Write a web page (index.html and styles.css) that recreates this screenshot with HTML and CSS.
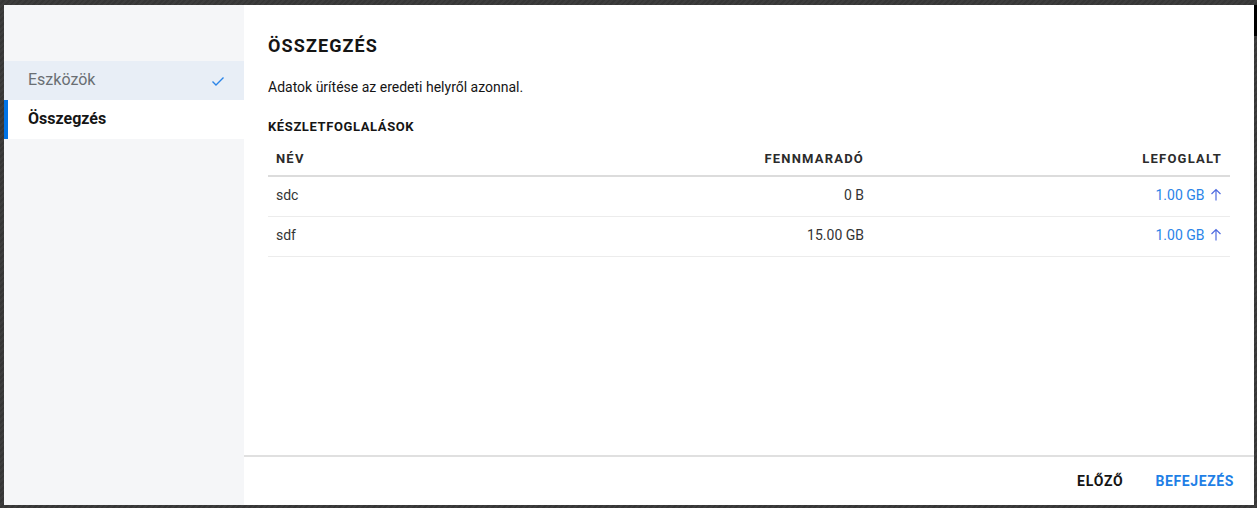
FILE: index.html
```html
<!DOCTYPE html>
<html lang="hu">
<head>
<meta charset="utf-8">
<title>Összegzés</title>
<link rel="stylesheet" href="styles.css">
</head>
<body>
<div class="backdrop">
  <div class="modal">
    <aside class="sidebar">
      <div class="step done">
        <span>Eszközök</span>
        <svg class="check" width="14" height="14" viewBox="0 0 14 14"><path d="M1.5 7.5 L5 11 L12.5 3.5" fill="none" stroke="#2a84e8" stroke-width="1.4"/></svg>
      </div>
      <div class="step active"><span>Összegzés</span></div>
    </aside>
    <main class="main">
      <div class="content">
        <h1 class="title">ÖSSZEGZÉS</h1>
        <p class="desc">Adatok ürítése az eredeti helyről azonnal.</p>
        <h2 class="subtitle">KÉSZLETFOGLALÁSOK</h2>
        <table class="table">
          <thead>
            <tr><th class="c-name">NÉV</th><th class="c-num c-rem">FENNMARADÓ</th><th class="c-num">LEFOGLALT</th></tr>
          </thead>
          <tbody>
            <tr><td>sdc</td><td class="c-num">0 B</td><td class="c-num link">1.00 GB <svg class="arrow" width="12" height="13" viewBox="0 0 12 13"><path d="M6 12.5 V1.5 M1.5 6 L6 1.5 L10.5 6" fill="none" stroke="#4f6be0" stroke-width="1.2"/></svg></td></tr>
            <tr><td>sdf</td><td class="c-num">15.00 GB</td><td class="c-num link">1.00 GB <svg class="arrow" width="12" height="13" viewBox="0 0 12 13"><path d="M6 12.5 V1.5 M1.5 6 L6 1.5 L10.5 6" fill="none" stroke="#4f6be0" stroke-width="1.2"/></svg></td></tr>
          </tbody>
        </table>
      </div>
      <footer class="footer">
        <button class="btn">ELŐZŐ</button>
        <button class="btn primary">BEFEJEZÉS</button>
      </footer>
    </main>
  </div>
  <div class="scrollbar"></div>
</div>
</body>
</html>
```
FILE: styles.css
```css
html, body {
  margin: 0;
  padding: 0;
  height: 100%;
}
body {
  font-family: Roboto, "Liberation Sans", sans-serif;
  color: #151515;
  background: #3b3b3b;
}
.backdrop {
  height: 508px;
  padding: 5px 3px 3px 4px;
  box-sizing: border-box;
  position: relative;
  background: repeating-linear-gradient(135deg, #3d3d3d 0 2px, #363636 2px 4px);
}
.scrollbar {
  position: absolute;
  top: 5px;
  right: 0;
  width: 3px;
  height: 31px;
  background: #000;
}
.modal {
  display: flex;
  height: 500px;
  background: #fff;
}
.sidebar {
  width: 240px;
  flex: none;
  background: #f5f6f8;
  padding-top: 56px;
  box-sizing: border-box;
}
.step {
  height: 39px;
  display: flex;
  align-items: center;
  justify-content: space-between;
  padding: 0 19px 2px 24px;
  box-sizing: border-box;
  font-size: 16px;
}
.step.done {
  background: #e8eef6;
  color: #6a6e73;
}
.step.done .check {
  margin-top: 2px;
}
.step.active {
  background: #fff;
  font-weight: 700;
  color: #151515;
  border-left: 4px solid #0073e6;
  padding-left: 20px;
}
.main {
  flex: 1;
  display: flex;
  flex-direction: column;
  min-width: 0;
}
.content {
  flex: 1;
  padding: 30px 24px 0 24px;
}
.title {
  margin: 0;
  font-size: 18px;
  font-weight: 700;
  letter-spacing: 1.1px;
  line-height: 21px;
  color: #151515;
}
.desc {
  margin: 21px 0 0 0;
  font-size: 14px;
  line-height: 20px;
}
.subtitle {
  margin: 20px 0 0 0;
  font-size: 13px;
  font-weight: 700;
  line-height: 20px;
  letter-spacing: 0.6px;
}
.table {
  width: 962px;
  border-collapse: collapse;
  table-layout: fixed;
  margin-top: 4px;
  font-size: 14px;
}
.table th {
  font-size: 13px;
  font-weight: 700;
  color: #2b2b2b;
  letter-spacing: 1.2px;
  height: 34px;
  padding: 0 8px;
  border-bottom: 2px solid #dcdcdc;
  vertical-align: middle;
}
.table td {
  height: 36px;
  padding: 0 8px 3px 8px;
  border-bottom: 1px solid #ececec;
  color: #333;
}
.c-name {
  text-align: left;
  width: 284px;
}
.c-rem {
  width: 288px;
}
.c-num {
  text-align: right;
}
.link {
  color: #2a84e8 !important;
}
.arrow {
  vertical-align: -1px;
  margin-left: 2px;
}
.footer {
  height: 48px;
  border-top: 2px solid #e0e0e0;
  display: flex;
  justify-content: flex-end;
  align-items: center;
  gap: 12px;
  padding-right: 10px;
}
.btn {
  background: none;
  border: none;
  font-family: Roboto, "Liberation Sans", sans-serif;
  font-size: 14px;
  font-weight: 700;
  letter-spacing: 0.8px;
  color: #151515;
  padding: 6px 10px;
  margin-top: 0;
}
.btn.primary {
  color: #1f7fe6;
  letter-spacing: 0.6px;
}
```
